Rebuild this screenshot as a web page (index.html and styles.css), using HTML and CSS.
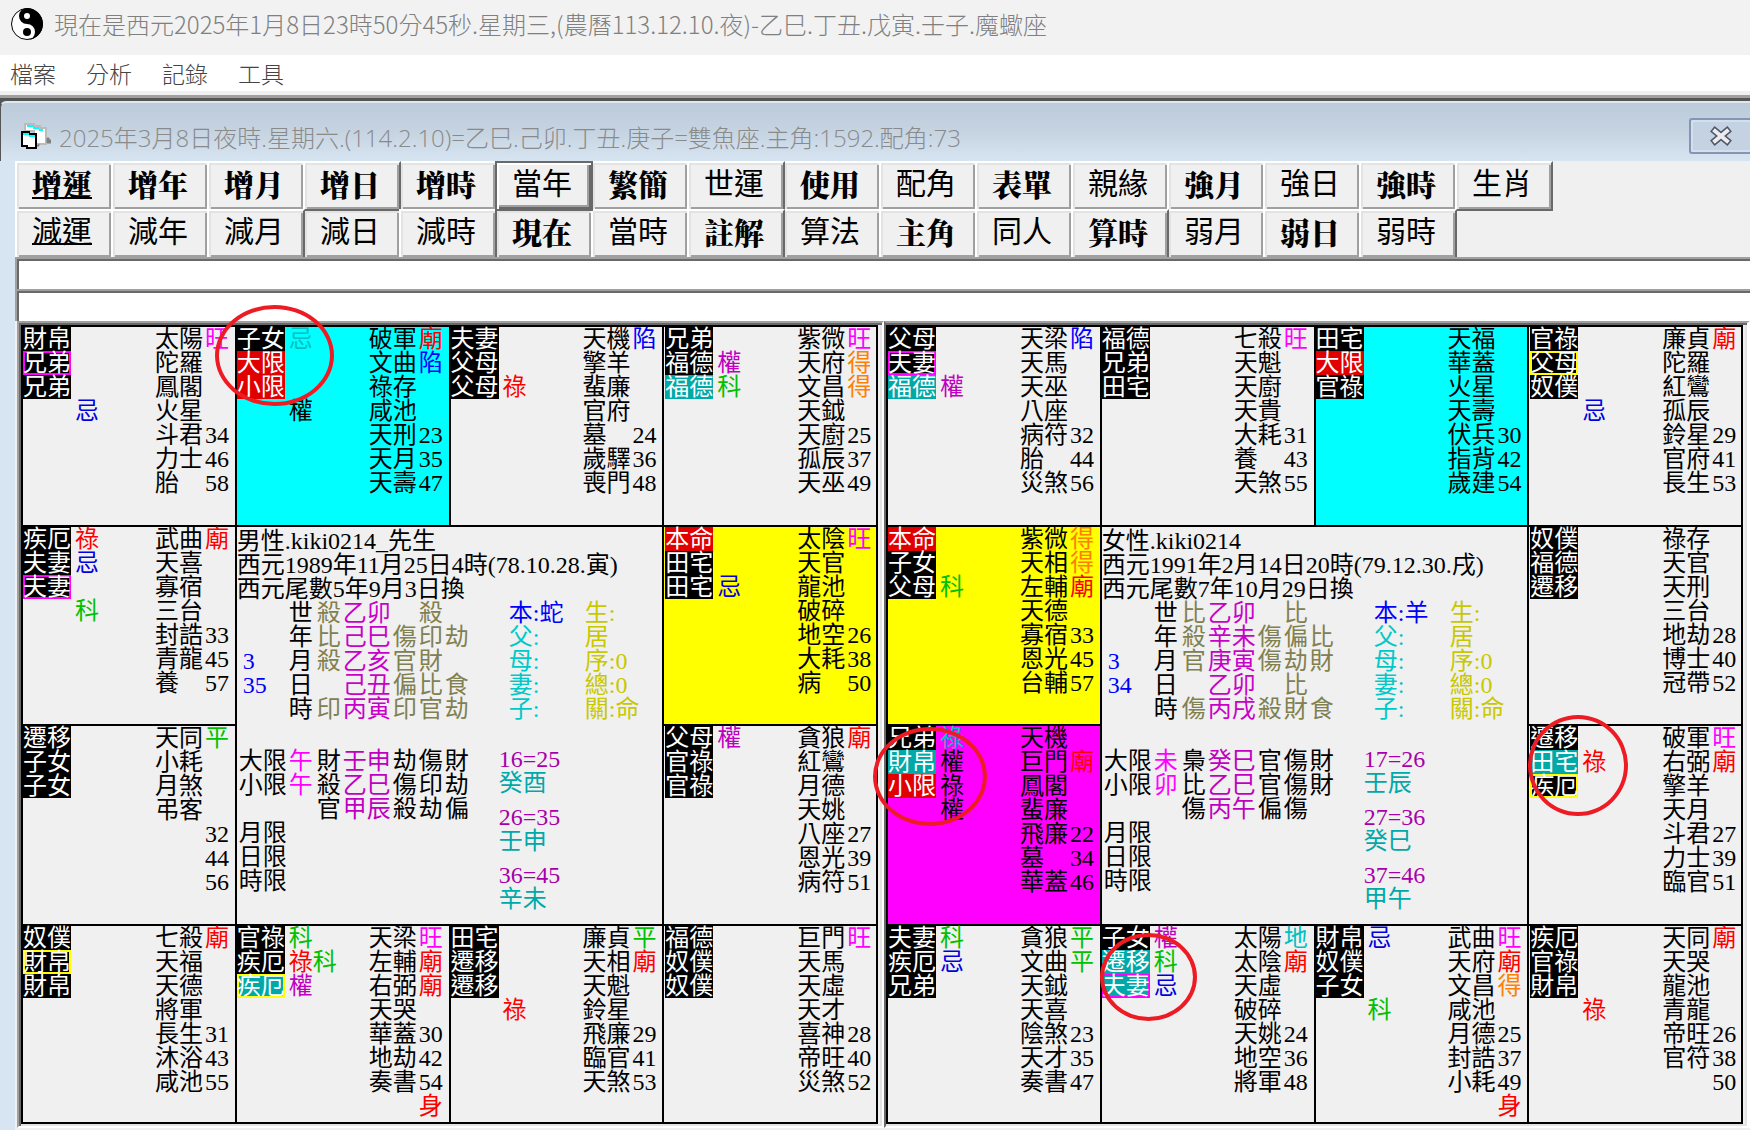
FILE: index.html
```html
<!DOCTYPE html>
<html lang="zh-Hant">
<head>
    <meta charset="UTF-8">
    <meta name="viewport" content="width=device-width, initial-scale=1.0">
    <title>紫微斗數</title>
    <link rel="stylesheet" href="styles.css">
</head>
<body>
    <header class="app-title">
        <svg class="app-icon" viewBox="0 0 32 32">
            <circle cx="16" cy="16" r="15.5" fill="#fff" stroke="#000"/>
            <path d="M16 0a16 16 0 0 1 0 32a8 8 0 0 0 0-16a8 8 0 0 1 0-16z" fill="#000"/>
            <circle cx="16" cy="8" r="3" fill="#fff"/>
            <circle cx="16" cy="24" r="4" fill="#000"/>
        </svg>
        <span>現在是西元2025年1月8日23時50分45秒.星期三,(農曆113.12.10.夜)-乙巳.丁丑.戊寅.壬子.魔蠍座</span>
    </header>

    <nav class="menu">
        <button>檔案</button>
        <button>分析</button>
        <button>記錄</button>
        <button>工具</button>
    </nav>

    <main class="child-window">
        <div class="child-title">
            <svg class="form-icon" viewBox="0 0 30 26">
                <path d="M4 1h9v2h6v2h6v16H13V8H4z" fill="#fff" stroke="#bbb" stroke-width="2"/>
                <path d="M6 3h6M12 5h6M18 7h4" stroke="#0ff" stroke-width="2"/>
                <path d="M18 21v2h-4M26 15h2v2h2v3h-4z" fill="#808080" stroke="#808080"/>
                <path d="M1 9h7v2h7v14H6v-2H1z" fill="#fff" stroke="#000" stroke-width="2"/>
                <path d="M2 11h6M8 13h6" stroke="#0ff" stroke-width="2"/>
            </svg>
            <span class="child-text">2025年3月8日夜時.星期六.(114.2.10)=乙巳.己卯.丁丑.庚子=雙魚座.主角:1592.配角:73</span>
            <button class="close" aria-label="關閉">
                <svg viewBox="0 0 24 20">
                    <path d="M6 5L18 15M18 5L6 15" stroke="#50566a" stroke-width="7" stroke-linecap="square"/>
                    <path d="M6 5L18 15M18 5L6 15" stroke="#ececec" stroke-width="4" stroke-linecap="square"/>
                </svg>
            </button>
        </div>

        <div class="child-body">
            <div class="toolbar">
                <button class="bold raised under">增運</button>
                <button class="bold raised">增年</button>
                <button class="bold raised">增月</button>
                <button class="bold raised">增日</button>
                <button class="bold">增時</button>
                <button class="focused">當年</button>
                <button class="bold">繁簡</button>
                <button class="raised">世運</button>
                <button class="bold">使用</button>
                <button>配角</button>
                <button class="bold">表單</button>
                <button>親緣</button>
                <button class="bold">強月</button>
                <button>強日</button>
                <button class="bold">強時</button>
                <button class="raised">生肖</button>
            </div>
            <div class="toolbar">
                <button class="raised under">減運</button>
                <button class="raised">減年</button>
                <button class="raised">減月</button>
                <button>減日</button>
                <button class="raised">減時</button>
                <button class="bold">現在</button>
                <button class="raised">當時</button>
                <button class="bold raised">註解</button>
                <button>算法</button>
                <button class="bold">主角</button>
                <button>同人</button>
                <button class="bold raised">算時</button>
                <button>弱月</button>
                <button class="bold">弱日</button>
                <button>弱時</button>
            </div>
            <input class="line" type="text" aria-label="訊息一">
            <input class="line" type="text" aria-label="訊息二">

            <div class="boards">
                <div class="panel"><div class="chart" id="male"></div></div>
                <div class="panel"><div class="chart" id="female"></div></div>
            </div>
        </div>
    </main>

    <script src="script.js"></script>
</body>
</html>
```

FILE: styles.css
```css
* {
    box-sizing: border-box;
    margin: 0;
    padding: 0;
}

body {
    background: #f0f0f0;
    color: #000;
    font-family: "Liberation Serif", "Noto Sans CJK TC", sans-serif;
    font-size: 24px;
    line-height: 24px;
    overflow: hidden;
}

button {
    font: inherit;
    color: inherit;
    border: none;
    background: none;
}

.app-title {
    display: flex;
    align-items: center;
    gap: 11px;
    height: 55px;
    padding: 0 0 7px 11px;
    background: #f2f2f2;
    color: #808080;
    font-family: "Noto Sans CJK TC", sans-serif;
    font-weight: 300;
    white-space: nowrap;
}

.app-icon {
    width: 32px;
    height: 32px;
}

.menu {
    display: flex;
    gap: 30px;
    height: 40px;
    padding: 0 10px;
    background: #fff;
    border-bottom: 4px solid #f0f0f0;
    color: #444;
    font-family: "Noto Sans CJK TC", sans-serif;
    font-size: 23px;
    font-weight: 300;
}

/* Child window */
.child-window {
    border-top: 3px solid #a0a0a0;
    background: #555;
    padding-top: 3px;
}

.child-title {
    display: flex;
    align-items: center;
    height: 60px;
    padding-left: 20px;
    border-left: 1px solid #555;
    border-top: 2px solid #dfe8f0;
    border-radius: 6px 0 0 0;
    background: linear-gradient(#bccbda, #c6d4e2 50%, #d7e4f2);
    color: #8a8a8a;
    font-family: "Open Sans", "Noto Sans CJK TC", sans-serif;
    font-weight: 300;
    white-space: nowrap;
}

.form-icon {
    width: 30px;
    height: 26px;
    margin-top: 8px;
    margin-right: 8px;
}

.child-text {
    flex: 1;
    padding-top: 12px;
}

.close {
    width: 61px;
    height: 36px;
    margin-top: 8px;
    border: 2px solid #8495b5;
    border-right: none;
    border-radius: 3px 0 0 3px;
    box-shadow: inset 2px 2px #d3dfec, inset 0 -2px #d3dfec;
    background: #c4d2e1;
}

.close svg {
    display: block;
    width: 24px;
    height: 20px;
    margin: 0 auto;
}

.child-body {
    border-left: 15px solid #d7e4f2;
    background: #f0f0f0;
}

/* Buttons overlap by 2px, .raised ones are painted above their neighbours */
.toolbar {
    display: flex;
    height: 48px;
}

.toolbar button {
    position: relative;
    width: 98px;
    height: 50px;
    flex: none;
    margin-right: -2px;
    padding: 0 4px 10px 0;
    border: 2px solid;
    border-color: #fff #696969 #696969 #fff;
    box-shadow: inset 2px 2px #e3e3e3, inset -2px -2px #a0a0a0;
    background: #f0f0f0;
    font-family: "Noto Sans CJK TC", sans-serif;
    font-size: 30px;
    line-height: 36px;
}

.toolbar .bold {
    font-family: "Noto Serif CJK TC", "Noto Sans CJK TC", serif;
    font-weight: 900;
    padding-bottom: 6px;
}

.toolbar .under {
    text-decoration: underline;
    text-decoration-thickness: 2px;
}

.toolbar .raised {
    z-index: 1;
}

.toolbar .focused {
    z-index: 2;
    border-color: #696969;
    box-shadow: inset 2px 2px #fff, inset -2px -2px #696969, inset -4px -4px #a0a0a0;
}

.line {
    position: relative;
    z-index: 3;
    display: block;
    width: 100%;
    height: 32px;
    padding: 4px 6px;
    border: solid #a0a0a0;
    border-width: 2px 0 0 2px;
    box-shadow: inset 2px 2px #696969;
    background: #fff;
    font: inherit;
}

/* Boards */
.boards {
    display: flex;
    padding-left: 2px;
    padding-bottom: 8px;
}

.panel {
    box-sizing: content-box;
    flex: 1 1 0;
    padding: 2px 4px 0 2px;
    border: 2px solid;
    border-color: #a0a0a0 #fff #fff #a0a0a0;
    box-shadow: inset 2px 2px #696969, inset -2px -2px #e3e3e3;
    min-width: 0;
}

.panel + .panel {
    padding-left: 0;
    border-left-color: #696969;
    border-right-width: 3px;
    box-shadow: inset 0 2px #696969, inset -2px -2px #e3e3e3;
}

.chart {
    display: grid;
    grid-template-columns: repeat(4, 1fr);
    grid-template-rows: 198px 197px 198px 196px;
    gap: 2px;
    border: 2px solid #000;
    margin-bottom: 2px;
    background: #000;
}

.cell {
    position: relative;
    display: flex;
    background: #f0f0f0;
}

.cell:nth-child(4),
.cell.last {
    padding-left: 1px;
}

.cyan { background: #0ff; }
.yellow { background: #ff0; }
.magenta { background: #f0f; }

.tags {
    list-style: none;
    width: 48px;
}

.tags li {
    height: 24px;
    background: #000;
    color: #fff;
}

.tags .red { background: #e00000; }
.tags .teal { background: #00a8a8; }
.tags .box-m { box-shadow: inset 0 0 0 2px #f0f; }
.tags .box-y { box-shadow: inset 0 0 0 2px #ff0; }

.marks {
    width: 80px;
    padding-left: 4px;
}

.marks div,
.stars div {
    height: 24px;
}

.stars {
    display: grid;
    grid-template-columns: 50px 24px;
    grid-auto-rows: 24px;
    margin-left: 4px;
}

.c-red { color: #f00; }
.c-blue { color: #0000e0; }
.c-green { color: #00c000; }
.c-purple { color: #c000c0; }
.c-pink { color: #f0f; }
.c-fall { color: #00f; }
.c-orange { color: #ff8000; }
.c-teal { color: #00c0c0; }

/* Middle of the chart */
.center {
    grid-area: 2 / 2 / 4 / 4;
    padding-top: 2px;
    background: #f0f0f0;
    white-space: nowrap;
}

.center table {
    border-spacing: 0;
    table-layout: fixed;
    width: 100%;
}

.center td {
    height: 24px;
}

.col-num { width: 52px; }
.col-label { width: 28px; }
.col-god { width: 26px; }
.col-pillar { width: 50px; }
.col-last { width: 64px; }
.col-kin { width: 76px; }

.num {
    padding-left: 6px;
    color: #00f;
}

.god { color: #808050; }
.pillar { color: #c800c8; }
.kin { color: #00c8c8; }
.kin.self { color: #00f; }
.life { color: #c8c800; }

.limits {
    display: flex;
    align-items: flex-start;
    padding-top: 28px;
}

.center .limits table {
    width: 262px;
}

.limits td:first-child {
    padding-left: 2px;
}

.limits .pillar { color: #c000c0; }

.age {
    height: 22px;
    line-height: 20px;
    color: #a800a8;
}

.stem {
    margin-bottom: 12px;
    color: #00a8a8;
}

/* Hand drawn circles over the cells */
.ring {
    position: absolute;
    z-index: 5;
    border: 4px solid #ed1c24;
    border-radius: 50%;
    pointer-events: none;
}

.ring-a { left: -22px; top: -22px; width: 119px; height: 101px; }
.ring-b { left: -15px; top: 1px; width: 114px; height: 99px; }
.ring-c { left: -1px; top: -11px; width: 100px; height: 101px; }
.ring-d { left: -2px; top: 7px; width: 97px; height: 88px; }
```

FILE: script.js
```js
// tags: name:style, marks: one entry per row, stars: name + strength or age
const male = {
    cells: [
        { tags: '財帛 兄弟:box-m 兄弟', marks: ',,,忌', stars: '太陽旺 陀羅 鳳閣 火星 斗君34 力士46 胎58' },
        { bg: 'cyan', ring: 'ring-a', tags: '子女 大限:red 小限:red', marks: '忌:c-teal,,,權:c-black', stars: '破軍廟 文曲陷 祿存 咸池 天刑23 天月35 天壽47' },
        { tags: '夫妻 父母 父母', marks: ',,祿', stars: '天機陷 擎羊 蜚廉 官府 墓24 歲驛36 喪門48' },
        { tags: '兄弟 福德 福德:teal', marks: ',權,科', stars: '紫微旺 天府得 文昌得 天鉞 天廚25 孤辰37 天巫49' },
        { tags: '疾厄 夫妻 夫妻:box-m', marks: '祿,忌,,科', stars: '武曲廟 天喜 寡宿 三台 封誥33 青龍45 養57' },
        { bg: 'yellow last', tags: '本命:red 田宅 田宅', marks: ',,忌', stars: '太陰旺 天官 龍池 破碎 地空26 大耗38 病50' },
        { tags: '遷移 子女 子女', marks: '', stars: '天同平 小耗 月煞 弔客 32 44 56' },
        { bg: 'last', tags: '父母 官祿 官祿', marks: '權', stars: '貪狼廟 紅鸞 月德 天姚 八座27 恩光39 病符51' },
        { tags: '奴僕 財帛:box-y 財帛', marks: '', stars: '七殺廟 天福 天德 將軍 長生31 沐浴43 咸池55' },
        { tags: '官祿 疾厄 疾厄:teal:box-y', marks: '科,祿科,權', stars: '天梁旺 左輔廟 右弼廟 天哭 華蓋30 地劫42 奏書54 身' },
        { tags: '田宅 遷移 遷移', marks: ',,,祿', stars: '廉貞平 天相廟 天魁 鈴星 飛廉29 臨官41 天煞53' },
        { bg: 'last', tags: '福德 奴僕 奴僕', marks: '', stars: '巨門旺 天馬 天虛 天才 喜神28 帝旺40 災煞52' }
    ],
    head: ['男性.kiki0214_先生', '西元1989年11月25日4時(78.10.28.寅)', '西元尾數5年9月3日換'],
    pillars: [
        ['', '世', '殺', '乙卯', '', '殺', '', '本:蛇', '生:'],
        ['', '年', '比', '己巳', '傷', '印', '劫', '父:', '居'],
        ['3', '月', '殺', '乙亥', '官', '財', '', '母:', '序:0'],
        ['35', '日', '', '己丑', '偏', '比', '食', '妻:', '總:0'],
        ['', '時', '印', '丙寅', '印', '官', '劫', '子:', '關:命']
    ],
    limits: [
        ['大限', '午', '財', '壬申', '劫', '傷', '財'],
        ['小限', '午', '殺', '乙巳', '傷', '印', '劫'],
        ['', '', '官', '甲辰', '殺', '劫', '偏'],
        ['月限'], ['日限'], ['時限']
    ],
    ages: [['16=25', '癸酉'], ['26=35', '壬申'], ['36=45', '辛未']]
};

const female = {
    cells: [
        { tags: '父母 夫妻:box-m 福德:teal', marks: ',,權', stars: '天梁陷 天馬 天巫 八座 病符32 胎44 災煞56' },
        { tags: '福德 兄弟 田宅', marks: '', stars: '七殺旺 天魁 天廚 天貴 大耗31 養43 天煞55' },
        { bg: 'cyan', tags: '田宅 大限:red 官祿', marks: '', stars: '天福 華蓋 火星 天壽 伏兵30 指背42 歲建54' },
        { tags: '官祿 父母:box-y 奴僕', marks: ',,,忌', stars: '廉貞廟 陀羅 紅鸞 孤辰 鈴星29 官府41 長生53' },
        { bg: 'yellow', tags: '本命:red 子女 父母', marks: ',,科', stars: '紫微得 天相得 左輔廟 天德 寡宿33 恩光45 台輔57' },
        { bg: 'last', tags: '奴僕 福德 遷移', marks: '', stars: '祿存 天官 天刑 三台 地劫28 博士40 冠帶52' },
        { bg: 'magenta', ring: 'ring-b', tags: '兄弟 財帛:teal 小限:red', marks: '祿:c-teal,權:c-black,祿:c-black,權:c-black', stars: '天機 巨門廟 鳳閣 蜚廉 飛廉22 墓34 華蓋46' },
        { bg: 'last', ring: 'ring-c', tags: '遷移 田宅:teal 疾厄:box-y', marks: ',祿', stars: '破軍旺 右弼廟 擎羊 天月 斗君27 力士39 臨官51' },
        { tags: '夫妻 疾厄 兄弟', marks: '科,忌', stars: '貪狼平 文曲平 天鉞 天喜 陰煞23 天才35 奏書47' },
        { ring: 'ring-d', tags: '子女 遷移:teal 夫妻:teal:box-m', marks: '權,科,忌', stars: '太陽地 太陰廟 天虛 破碎 天姚24 地空36 將軍48' },
        { tags: '財帛 奴僕 子女', marks: '忌,,,科', stars: '武曲旺 天府廟 文昌得 咸池 月德25 封誥37 小耗49 身' },
        { bg: 'last', tags: '疾厄 官祿 財帛', marks: ',,,祿', stars: '天同廟 天哭 龍池 青龍 帝旺26 官符38 50' }
    ],
    head: ['女性.kiki0214', '西元1991年2月14日20時(79.12.30.戌)', '西元尾數7年10月29日換'],
    pillars: [
        ['', '世', '比', '乙卯', '', '比', '', '本:羊', '生:'],
        ['', '年', '殺', '辛未', '傷', '偏', '比', '父:', '居'],
        ['3', '月', '官', '庚寅', '傷', '劫', '財', '母:', '序:0'],
        ['34', '日', '', '乙卯', '', '比', '', '妻:', '總:0'],
        ['', '時', '傷', '丙戌', '殺', '財', '食', '子:', '關:命']
    ],
    limits: [
        ['大限', '未', '梟', '癸巳', '官', '傷', '財'],
        ['小限', '卯', '比', '乙巳', '官', '傷', '財'],
        ['', '', '傷', '丙午', '偏', '傷', ''],
        ['月限'], ['日限'], ['時限']
    ],
    ages: [['17=26', '壬辰'], ['27=36', '癸巳'], ['37=46', '甲午']]
};

const colors = {
    祿: 'c-red', 權: 'c-purple', 科: 'c-green', 忌: 'c-blue',
    廟: 'c-red', 旺: 'c-pink', 陷: 'c-fall', 得: 'c-orange', 平: 'c-green', 地: 'c-teal', 身: 'c-red'
};

function markRow(row) {
    const [text, color] = row.split(':');
    return '<div>' + [...text].map(ch => `<span class="${color || colors[ch]}">${ch}</span>`).join('') + '</div>';
}

function starRow(star) {
    // a trailing number is an age, a third character is the strength
    const age = star.match(/\d+$/);
    let name = age ? star.slice(0, age.index) : star.slice(0, 2);
    let value = age ? age[0] : star.slice(2);
    if (star === '身') {
        name = '';
        value = star;
    }
    return `<div>${name}</div><div class="${colors[value] || ''}">${value}</div>`;
}

function cell(c) {
    const tags = c.tags.split(' ').map(t => {
        const [name, ...style] = t.split(':');
        return `<li class="${style.join(' ')}">${name}</li>`;
    }).join('');
    return `<div class="cell ${c.bg || ''}">
        <ul class="tags">${tags}</ul>
        <div class="marks">${c.marks.split(',').map(markRow).join('')}</div>
        <div class="stars">${c.stars.split(' ').map(starRow).join('')}</div>
        ${c.ring ? `<div class="ring ${c.ring}"></div>` : ''}
    </div>`;
}

function center(d) {
    const names = ['num', '', 'god', 'pillar', 'god', 'god', 'god', 'kin', 'life'];
    const rows = d.pillars.map((r, n) => '<tr>' + r.map((v, i) =>
        `<td class="${names[i]}${n === 0 && i === 7 ? ' self' : ''}">${v}</td>`).join('') + '</tr>').join('');
    const limitNames = ['', 'c-pink', '', 'pillar', '', '', ''];
    const limits = d.limits.map(r => '<tr>' + limitNames.map((name, i) =>
        `<td class="${name}">${r[i] || ''}</td>`).join('') + '</tr>').join('');
    const cols = '<col class="col-num"><col class="col-label"><col class="col-god"><col class="col-pillar"><col class="col-god"><col class="col-god">';
    return `<div class="center">
        ${d.head.map(line => `<p>${line}</p>`).join('')}
        <table><colgroup>${cols}<col class="col-last"><col class="col-kin"><col></colgroup>${rows}</table>
        <div class="limits">
            <table><colgroup>${cols}<col></colgroup>${limits}</table>
            <div>${d.ages.map(a => `<p class="age">${a[0]}</p><p class="stem">${a[1]}</p>`).join('')}</div>
        </div>
    </div>`;
}

function draw(id, d) {
    const html = d.cells.map(cell);
    html.splice(5, 0, center(d));
    document.getElementById(id).innerHTML = html.join('');
}

draw('male', male);
draw('female', female);
```
